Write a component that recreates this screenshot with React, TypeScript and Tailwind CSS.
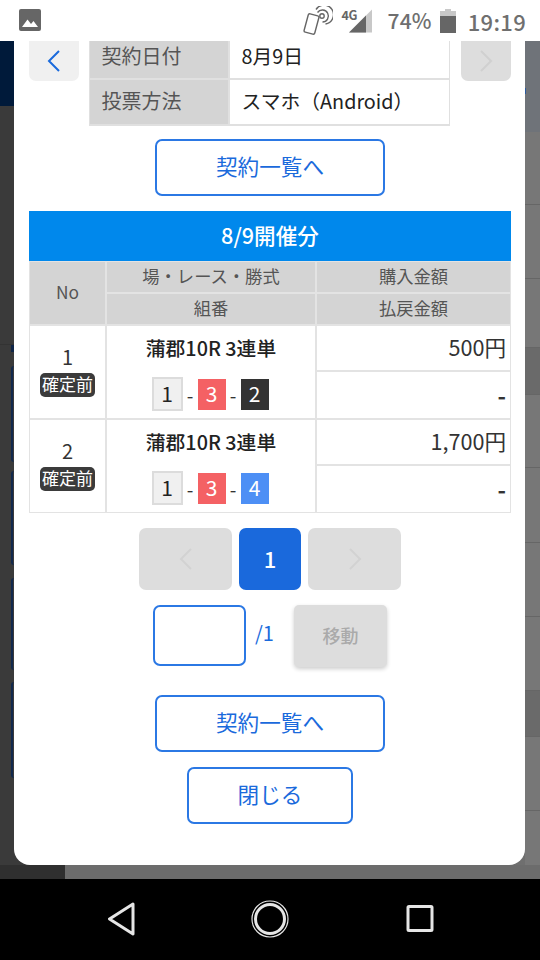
const font = "font-['Noto_Sans_CJK_JP','Noto_Sans',sans-serif]";

function Chevron({ dir, color, w = 2 }: { dir: "l" | "r"; color: string; w?: number }) {
  return (
    <svg width="16" height="24" viewBox="0 0 16 24" fill="none">
      <path d={dir === "l" ? "M13 2 L3 12 L13 22" : "M3 2 L13 12 L3 22"} stroke={color} strokeWidth={w} />
    </svg>
  );
}

function StatusBar() {
  return (
    <div className="h-[41px] shrink-0 bg-white flex items-center pl-[19px] pr-[14px] text-[#6f6f6f]">
      <svg width="22" height="23" viewBox="0 0 22 23" className="mb-[1px]">
        <rect x="0" y="0" width="22" height="22" rx="2" fill="#666" />
        <path d="M3 18 L8.5 10.5 L12 15 L14.5 12 L19 18 Z" fill="#fff" />
      </svg>
      <div className="ml-auto flex items-center">
        <svg width="30" height="30" viewBox="0 0 30 30" fill="none" stroke="#666" strokeWidth="1.4" className="mt-[1px]">
          <rect x="3" y="8.5" width="11" height="19" rx="1.6" transform="rotate(15 8.5 18)" />
          <circle cx="19" cy="10" r="2.2" />
          <path d="M14.5 6.5 A6 6 0 1 1 19.5 16" />
          <path d="M13 3.5 A9.5 9.5 0 1 1 22.5 18" />
        </svg>
        <div className="relative w-[32px] h-[28px] ml-[8px]">
          <svg width="32" height="28" viewBox="0 0 32 28" className="absolute left-0 top-0">
            <path d="M8 25.5 L31 2.5 L31 25.5 Z" fill="#c8c8c8" />
            <path d="M8 25.5 L25 8.5 L25 25.5 Z" fill="#666" />
          </svg>
          <span className="absolute left-[1px] top-[0px] text-[12.5px] leading-[16px] font-bold text-[#666] tracking-[-0.5px]">4G</span>
        </div>
        <span className="ml-[15px] text-[21px] leading-none font-medium tracking-[0.2px]">74%</span>
        <svg width="16" height="24" viewBox="0 0 16 24" className="ml-[8px]">
          <path d="M5 0 H11 V2 H16 V24 H0 V2 H5 Z" fill="#c8c8c8" />
          <rect x="0" y="7" width="16" height="17" fill="#666" />
        </svg>
        <span className="ml-[12px] text-[22px] leading-none font-medium tracking-[0.3px]">19:19</span>
      </div>
    </div>
  );
}

function OutlineButton({ label, w }: { label: string; w: string }) {
  return (
    <button className={`${w} h-[57px] border-2 border-[#2b78e4] rounded-[7px] bg-white text-[#1a6adc] text-[21.6px] leading-none pb-[3px]`}>
      {label}
    </button>
  );
}

function Chip({ n, cls }: { n: number; cls: string }) {
  return (
    <span className={`w-[28px] h-[31px] flex items-center justify-center text-[21px] leading-none pb-[1px] ${cls}`}>{n}</span>
  );
}

function Combo({ last, lastCls }: { last: number; lastCls: string }) {
  return (
    <div className="flex items-center text-[19px] text-[#333] leading-none mr-[2px]">
      <span className="w-[31px] h-[34px] flex items-center justify-center bg-[#f0f0f0] border-2 border-[#dcdcdc] text-[21px] text-[#222] pb-[1px]">1</span>
      <span className="w-[15px] text-center">-</span>
      <Chip n={3} cls="bg-[#f46164] text-white" />
      <span className="w-[15px] text-center">-</span>
      <Chip n={last} cls={lastCls} />
    </div>
  );
}

function Head({ children, cls = "" }: { children: React.ReactNode; cls?: string }) {
  return <div className={`bg-[#d4d4d4] text-[#555] text-[17.3px] leading-none flex items-center justify-center pb-[2px] ${cls}`}>{children}</div>;
}

function Row({ no, amount, last, lastCls, r }: { no: number; amount: string; last: number; lastCls: string; r: string[] }) {
  return (
    <>
      <div className={`bg-white ${r[0]} flex flex-col items-center pt-[21px]`}>
        <span className="text-[20px] leading-[20px] mb-[6px] text-[#333]">{no}</span>
        <span className="w-[55px] h-[24px] rounded-[5px] bg-[#3b3b3b] text-white text-[17px] leading-[22px] text-center">確定前</span>
      </div>
      <div className={`bg-white ${r[1]} flex flex-col items-center pt-[6px]`}>
        <span className="text-[19.8px] leading-[32px] font-medium text-[#222]">蒲郡10R 3連単</span>
        <div className="mt-[13px]"><Combo last={last} lastCls={lastCls} /></div>
      </div>
      <div className="bg-white flex items-center justify-end pr-[4px] pb-[2px] text-[21.6px] leading-none text-[#333]">{amount}</div>
      <div className="bg-white flex items-center justify-end pr-[4px] text-[23px] leading-none font-bold text-[#333]">-</div>
    </>
  );
}

function Modal() {
  return (
    <div className="h-full bg-white rounded-b-[16px] pl-[15px] pr-[14px] flex flex-col items-center">
      <div className="w-full flex justify-between items-start h-[83px]">
        <div className="w-[50px] h-[40px] bg-[#f0f0f0] rounded-b-[7px] flex items-center justify-center">
          <Chevron dir="l" color="#1a6adc" />
        </div>
        <div className="w-[361px] -ml-[1px] mr-[1px] bg-[#e0e0e0] grid grid-cols-[138px_1fr] grid-rows-[37px_44px] gap-[2px] px-[1px] pb-[2px] text-[20px] leading-none">
          <div className="bg-[#d4d4d4] text-[#555] pl-[12px] pb-[7px] flex items-center">契約日付</div>
          <div className="bg-white text-[#222] pl-[12px] pb-[7px] flex items-center text-[19.8px]">8月9日</div>
          <div className="bg-[#d4d4d4] text-[#555] pl-[12px] pb-[3px] flex items-center">投票方法</div>
          <div className="bg-white text-[#222] pl-[12px] pb-[3px] flex items-center text-[19.8px]">スマホ（Android）</div>
        </div>
        <div className="w-[50px] h-[40px] bg-[#dddddd] rounded-b-[7px] flex items-center justify-center">
          <Chevron dir="r" color="#d0d0d0" />
        </div>
      </div>
      <div className="mt-[15px]"><OutlineButton label="契約一覧へ" w="w-[230px]" /></div>

      <div className="mt-[15px] w-[482px] h-[50px] bg-[#0088ec] text-white text-[21.6px] leading-none font-medium flex items-center justify-center pb-[2px]">8/9開催分</div>
      <div className="w-[482px] bg-[#e3e3e3] p-[1px] grid grid-cols-[75px_208px_193px] grid-rows-[30px_30px_44px_46px_44px_46px] gap-[2px]">
        <Head cls="row-span-2">No</Head>
        <Head>場・レース・勝式</Head>
        <Head>購入金額</Head>
        <Head>組番</Head>
        <Head>払戻金額</Head>
        <Row no={1} amount="500円" last={2} lastCls="bg-[#333333] text-white" r={["row-span-2", "row-span-2"]} />
        <Row no={2} amount="1,700円" last={4} lastCls="bg-[#4d8ff5] text-white" r={["row-span-2", "row-span-2"]} />
      </div>

      <div className="mt-[15px] flex gap-[7px]">
        <div className="w-[93px] h-[62px] rounded-[7px] bg-[#dddddd] flex items-center justify-center"><Chevron dir="l" color="#d2d2d2" /></div>
        <div className="w-[62px] h-[62px] rounded-[7px] bg-[#1a69dc] text-white text-[22px] font-medium leading-none pb-[2px] flex items-center justify-center">1</div>
        <div className="w-[93px] h-[62px] rounded-[7px] bg-[#dddddd] flex items-center justify-center"><Chevron dir="r" color="#d2d2d2" /></div>
      </div>

      <div className="mt-[15px] flex items-start w-[234px] h-[62px]">
        <div className="w-[93px] h-[61px] border-2 border-[#2b78e4] rounded-[7px] bg-white" />
        <span className="ml-[9px] w-[39px] text-[20px] leading-[56px] text-[#1a6adc]">/1</span>
        <div className="w-[93px] h-[62px] rounded-[5px] bg-[#dddddd] shadow-[0_2px_4px_rgba(0,0,0,0.2)] text-[#aaa] text-[18px] leading-none font-medium pb-[3px] flex items-center justify-center">移動</div>
      </div>

      <div className="mt-[28px]"><OutlineButton label="契約一覧へ" w="w-[230px]" /></div>
      <div className="mt-[15px]"><OutlineButton label="閉じる" w="w-[166px]" /></div>
    </div>
  );
}

function LeftStrip() {
  const cards = ["h-[96px] mt-[14px]", "h-[94px] mt-[9px]", "h-[92px] mt-[13px]", "h-[96px] mt-[12px]"];
  return (
    <div className="w-[14px] shrink-0 bg-[#3a3a3a] flex flex-col">
      <div className="h-[65px] bg-[#001a3a]" />
      <div className="h-[239px] border-b border-[#333]" />
      <div className="h-[7px] w-[3px] ml-[11px] bg-[#0f2547]" />
      {cards.map((c) => (
        <div key={c} className={`${c} w-[3px] ml-[11px] border-l-2 border-[#12294d] rounded-l-[3px]`} />
      ))}
    </div>
  );
}

function RightStrip() {
  const rows = [
    "h-[73px]",
    "h-[74px]",
    "h-[69px]",
    "h-[47px] bg-[#6a6a6a]",
    "h-[73px]",
    "h-[75px]",
    "h-[74px]",
    "h-[74px]",
    "h-[46px] bg-[#6a6a6a]",
    "h-[74px]",
  ];
  return (
    <div className="w-[15px] shrink-0 bg-[#777] flex flex-col">
      <div className="h-[91px] bg-[#6f7379] relative">
        <div className="absolute left-0 top-[47px] w-[1px] h-[6px] bg-[#2a5aa0]" />
      </div>
      {rows.map((c, i) => (
        <div key={i} className={`${c} border-b border-[#666] shrink-0`} />
      ))}
    </div>
  );
}

function NavBar() {
  return (
    <div className="h-[81px] shrink-0 bg-black flex items-center justify-center gap-[117px] pb-[1px]">
      <svg width="28" height="34" viewBox="0 0 28 34" fill="none" className="mr-[-2px]">
        <path d="M25 2 L1.5 17 L25 32 Z" stroke="#e6e6e6" strokeWidth="3" strokeLinejoin="round" />
      </svg>
      <svg width="38" height="38" viewBox="0 0 38 38" fill="none" className="mr-[-1px]">
        <circle cx="19" cy="19" r="18" stroke="#e6e6e6" strokeWidth="1.2" />
        <circle cx="19" cy="19" r="14.5" stroke="#e6e6e6" strokeWidth="3" />
      </svg>
      <svg width="28" height="30" viewBox="0 0 28 30" fill="none" className="overflow-visible">
        <rect x="3" y="2.5" width="24" height="24" rx="1" stroke="#e6e6e6" strokeWidth="3" />
      </svg>
    </div>
  );
}

export default function App() {
  return (
    <div className={`w-[540px] h-[960px] flex flex-col overflow-hidden bg-[#3a3a3a] ${font}`}>
      <StatusBar />
      <div className="h-[824px] shrink-0 flex overflow-hidden">
        <LeftStrip />
        <div className="flex-1 bg-[linear-gradient(90deg,#3a3a3a_50%,#6f6f6f_50%)]">
          <Modal />
        </div>
        <RightStrip />
      </div>
      <div className="h-[14px] shrink-0 flex">
        <div className="w-[65px] bg-[#2f2f2f]" />
        <div className="flex-1 bg-[#6c6c6c]" />
      </div>
      <NavBar />
    </div>
  );
}
